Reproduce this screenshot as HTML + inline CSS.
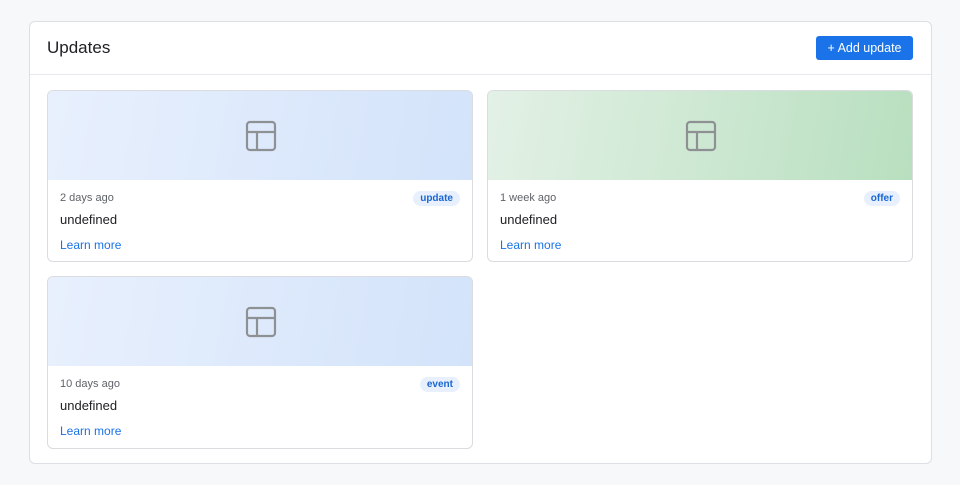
<!DOCTYPE html>
<html><head><style>
*{box-sizing:border-box;margin:0;padding:0}
body{width:960px;height:485px;background:#f7f8fa;font-family:"Liberation Sans",sans-serif;position:relative;overflow:hidden}
.panel{position:absolute;left:29px;top:21px;width:903px;height:443px;background:#fff;border:1px solid #dcdfe3;border-radius:6px}
.hdr{height:53px;border-bottom:1px solid #e6e8eb;position:relative}
.hdr h1{position:absolute;left:17px;top:16px;font-size:17px;font-weight:400;color:#202124}
.btn{position:absolute;left:786px;top:14px;width:97px;height:24px;background:#1a73e8;color:#fff;border-radius:3px;font-size:12.5px;text-align:center;line-height:24px}
.card{position:absolute;width:426px;height:172px;border:1px solid #dadce0;border-radius:6px;overflow:hidden;background:#fff}
.img{height:89px;position:relative}
.blue{background:linear-gradient(100deg,#e8f0fd,#d3e3fa)}
.green{background:linear-gradient(100deg,#e3f1e6,#b8dfbf)}
.img svg{position:absolute;left:197px;top:29px}
.time{position:absolute;left:12px;top:101px;font-size:11px;color:#5f6368}
.badge{position:absolute;right:12px;top:100px;height:15px;padding:0 7px;border-radius:8px;background:#e8f0fe;color:#1967d2;font-size:10px;font-weight:700;line-height:15px}
.t{position:absolute;left:12px;top:121px;font-size:13px;color:#202124}
.lm{position:absolute;left:12px;top:147px;font-size:12px;color:#1a73e8}
</style></head><body>
<div class="panel"><div class="hdr"><h1>Updates</h1><div class="btn">+ Add update</div></div></div>
<div class="card" style="left:47px;top:90px"><div class="img blue"><svg width="32" height="32" viewBox="0 0 32 32" fill="none" stroke="#8e9194" stroke-width="2.2"><rect x="2" y="2" width="28" height="28" rx="3"/><path d="M2 12H30M12 12V30"/></svg></div><div class="time">2 days ago</div><div class="badge">update</div><div class="t">undefined</div><div class="lm">Learn more</div></div>
<div class="card" style="left:487px;top:90px"><div class="img green"><svg width="32" height="32" viewBox="0 0 32 32" fill="none" stroke="#8e9194" stroke-width="2.2"><rect x="2" y="2" width="28" height="28" rx="3"/><path d="M2 12H30M12 12V30"/></svg></div><div class="time">1 week ago</div><div class="badge">offer</div><div class="t">undefined</div><div class="lm">Learn more</div></div>
<div class="card" style="left:47px;top:276px;height:173px"><div class="img blue"><svg width="32" height="32" viewBox="0 0 32 32" fill="none" stroke="#8e9194" stroke-width="2.2"><rect x="2" y="2" width="28" height="28" rx="3"/><path d="M2 12H30M12 12V30"/></svg></div><div class="time">10 days ago</div><div class="badge">event</div><div class="t">undefined</div><div class="lm">Learn more</div></div>
</body></html>
